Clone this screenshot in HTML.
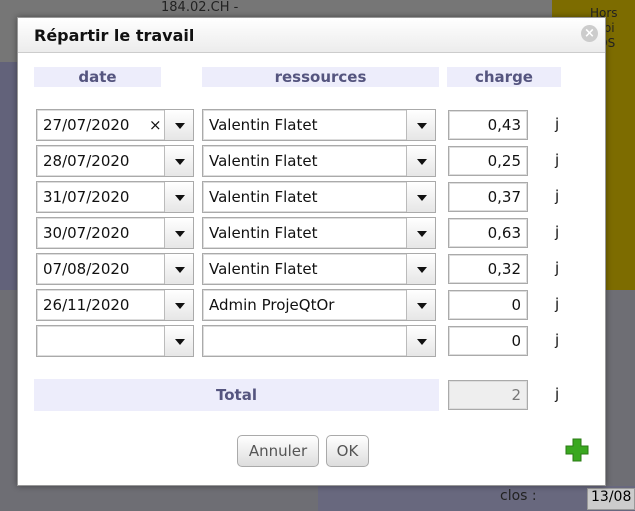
<!DOCTYPE html>
<html><head><meta charset="utf-8"><style>
*{box-sizing:border-box}
html,body{margin:0;width:635px;height:511px;overflow:hidden;background:#6e6e74}
body{font-family:"DejaVu Sans","Liberation Sans",sans-serif;position:relative}
.abs{position:absolute}
.dlg{left:17px;top:17px;width:589px;height:469px;background:#fff;border:1px solid #999;box-shadow:0 0 6px rgba(0,0,0,.4)}
.hdr{left:0;top:0;width:587px;height:35px;background:linear-gradient(#fff,#ececec);border-bottom:1px solid #ccc;font-weight:bold;font-size:16px;padding:8px 0 0 16px;color:#111}
.th{background:#ededfb;color:#55557f;font-weight:bold;font-size:15px;text-align:center;height:20px;line-height:20px}
.fld{border:1px solid #aaa;box-shadow:inset 0 0 0 1px #ddd;background:#fff;height:32px;font-size:15px;line-height:30px;padding-left:6px;color:#111}
.arr{position:absolute;right:0;top:0;width:29px;height:30px;border-left:1px solid #bbb;background:linear-gradient(#fff,#e6e6e6)}
.arr:after{content:"";position:absolute;left:10px;top:13px;border:5px solid transparent;border-top:6px solid #111;border-bottom:0}
.num{text-align:right;padding-right:6px;width:80px;height:30px;line-height:28px}
.j{font-size:15px;color:#111}
.btn{border:1px solid #aaa;border-radius:5px;background:linear-gradient(#fff,#ddd);font-size:15px;color:#555;text-align:center;height:32px;line-height:30px}
</style></head><body>
<div class="abs" style="left:0;top:0;width:552px;height:62px;background:#767676"></div>
<div class="abs" style="left:0;top:62px;width:17px;height:230px;background:#62627a"></div>
<div class="abs" style="left:552px;top:0;width:83px;height:290px;background:#7d6c00"></div>
<div class="abs" style="left:0;top:290px;width:635px;height:221px;background:#6e6e74"></div>
<div class="abs" style="left:318px;top:486px;width:317px;height:25px;background:#68687e"></div>
<div class="abs" style="left:161px;top:0;font-size:13px;color:#222">184.02.CH -</div>
<div class="abs" style="left:590px;top:6px;font-size:12px;color:#222;line-height:15px">Hors<br>sabi<br>CDS</div>
<div class="abs" style="left:500px;top:488px;font-size:14px;color:#222">clos :</div>
<div class="abs" style="left:587px;top:488px;width:48px;height:22px;background:#ccc;border:1px solid #999;font-size:14px;padding-left:3px">13/08</div>
<div class="abs dlg">
 <div class="abs hdr">Répartir le travail</div>
 <div class="abs" style="left:563px;top:7px;width:17px;height:17px;border-radius:50%;background:#ccc;color:#fff;font-size:13px;font-weight:bold;text-align:center;line-height:17px">×</div>
 <div class="abs th" style="left:16px;top:49px;width:127px">date</div>
 <div class="abs th" style="left:184px;top:49px;width:237px">ressources</div>
 <div class="abs th" style="left:429px;top:49px;width:114px">charge</div>
 <div id="rows"></div>
 <div class="abs th" style="left:16px;top:361px;width:405px;height:32px;line-height:32px">Total</div>
 <div class="abs fld num" style="left:430px;top:362px;background:#eee;color:#777">2</div>
 <div class="abs j" style="left:537px;top:367px">j</div>
 <div class="abs btn" style="left:219px;top:417px;width:82px">Annuler</div>
 <div class="abs btn" style="left:308px;top:417px;width:43px">OK</div>
 <svg class="abs" style="left:547px;top:420px" width="24" height="24" viewBox="0 0 24 24"><path d="M8 1h8v7h7v8h-7v7H8v-7H1V8h7z" fill="#3aa820" stroke="#2a7a14"/></svg>
</div>
<script>
var d=[["27/07/2020","Valentin Flatet","0,43"],["28/07/2020","Valentin Flatet","0,25"],["31/07/2020","Valentin Flatet","0,37"],["30/07/2020","Valentin Flatet","0,63"],["07/08/2020","Valentin Flatet","0,32"],["26/11/2020","Admin ProjeQtOr","0"],["","","0"]];
var h="";d.forEach(function(r,i){var t=91+i*36;
h+='<div class="abs fld" style="left:18px;top:'+t+'px;width:158px">'+r[0]+(i==0?'<span style="position:absolute;left:112px">×</span>':'')+'<div class="arr"></div></div>';
h+='<div class="abs fld" style="left:184px;top:'+t+'px;width:234px">'+r[1]+'<div class="arr"></div></div>';
h+='<div class="abs fld num" style="left:430px;top:'+(t+1)+'px">'+r[2]+'</div>';
h+='<div class="abs j" style="left:537px;top:'+(t+6)+'px">j</div>';});
document.getElementById("rows").innerHTML=h;
</script>
</body></html>
